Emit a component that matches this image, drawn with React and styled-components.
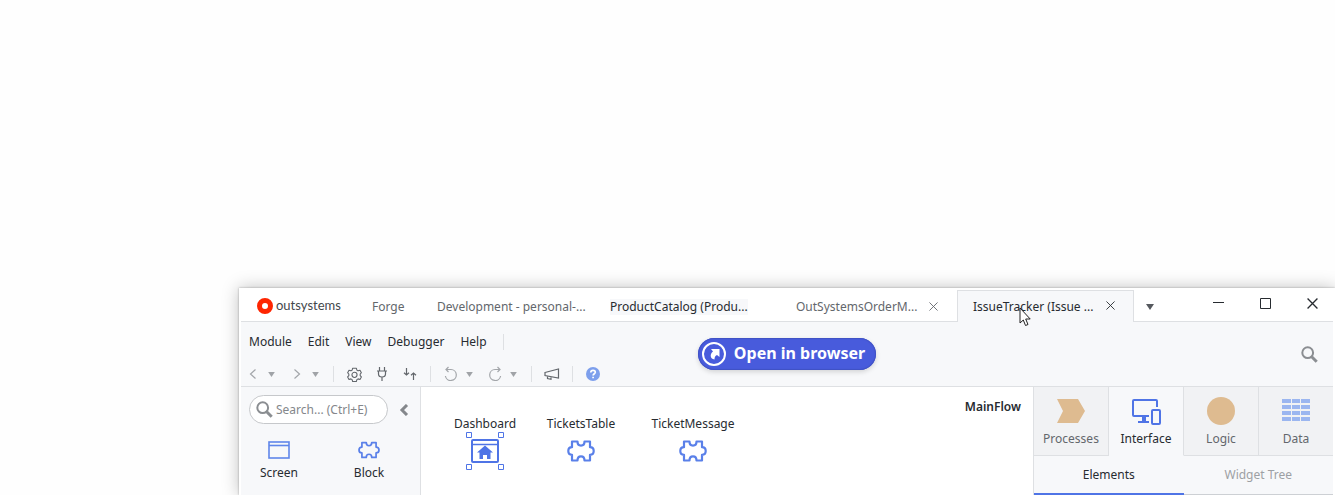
import React from "react";
import styled, { createGlobalStyle, css } from "styled-components";

const ink = "#272b30";
const line = "#dee0e3";
const surface = "#f7f8fa";
const blue = "#4f74e6";

const GlobalStyle = createGlobalStyle`
  * { box-sizing: border-box; }
  html, body, #root { height: 100%; }
  body {
    margin: 0;
    overflow: hidden;
    background: #fefefe;
    color: ${ink};
    font: 12px/16px "Noto Sans", "Open Sans", sans-serif;
  }
  button, input { font: inherit; color: inherit; }
  button { padding: 0; border: 0; background: none; }
  svg { display: block; flex: none; }
`;

const Page = styled.div`
  display: flex;
  height: 100%;
  padding: 288px 0 0 239px;
`;

const Window = styled.div`
  flex: 1;
  min-width: 0;
  display: flex;
  flex-direction: column;
  padding: 0 2px;
  background: #fff;
  box-shadow: 0 0 2px rgba(0, 0, 0, 0.3), 0 0 16px rgba(0, 0, 0, 0.25);
`;

const TitleBar = styled.header`
  display: flex;
  align-items: stretch;
  height: 34px;
  background: linear-gradient(${line}, ${line}) bottom / 100% 1px no-repeat;
`;

const Brand = styled.div`
  display: flex;
  align-items: center;
  gap: 3px;
  width: 115px;
  padding: 2px 0 0 16px;
  color: #44474b;
  font: 13px/16px Lato, sans-serif;
`;

const BrandName = styled.span`
  padding-bottom: 2px;
`;

const TabStrip = styled.nav`
  display: flex;
`;

const Tab = styled.div`
  position: relative;
  display: flex;
  align-items: center;
  justify-content: space-between;
  width: ${(p) => p.$width}px;
  padding: 4px 19px 0 16px;
  color: #63676c;
  ${(p) =>
    p.$active &&
    css`
      margin-top: 2px;
      padding: 0 18px 0 15px;
      border: 1px solid ${line};
      border-bottom: 0;
      background: ${surface};
      color: ${ink};
    `}
`;

const TabTitle = styled.button`
  white-space: nowrap;
  ${(p) =>
    p.$marked &&
    css`
      background: ${surface};
      color: ${ink};
    `}
`;

const TabClose = styled.button`
  padding-bottom: 2px;
`;

const Cursor = styled.svg`
  position: absolute;
  left: 61px;
  top: 16px;
`;

const TabMenu = styled.button`
  padding: 3px 0 0 12px;
`;

const WindowControls = styled.div`
  display: flex;
  align-items: center;
  gap: 36px;
  margin-left: auto;
  padding: 0 15px 3px 0;
`;

const Ribbon = styled.section`
  display: grid;
  grid-template-columns: 1fr auto 1fr;
  align-items: center;
  height: 65px;
  background: ${surface};
  border-bottom: 1px solid ${line};
`;

const Commands = styled.div`
  align-self: stretch;
  display: flex;
  flex-direction: column;
  justify-content: space-between;
  padding: 12px 0 4px 8px;
`;

const MenuBar = styled.nav`
  display: flex;
  gap: 16px;
`;

const Toolbar = styled.div`
  display: flex;
  align-items: center;
  height: 16px;
`;

const Tool = styled.button`
  display: flex;
  justify-content: center;
  width: ${(p) => p.$width || 16}px;
  margin-right: ${(p) => p.$after || 0}px;
  color: ${(p) => (p.$muted ? "#a3a6aa" : "#63676c")};
`;

const Divider = styled.span`
  width: 1px;
  height: 16px;
  margin-right: ${(p) => p.$after || 0}px;
  background: ${line};
`;

const OpenButton = styled.button`
  display: flex;
  align-items: center;
  gap: 8px;
  height: 32px;
  padding: 0 12px 0 4px;
  border-radius: 16px;
  background: #485bdc;
  box-shadow: inset 0 0 1px 1px #4051c4, 0 2px 5px rgba(0, 0, 0, 0.15);
  color: #fff;
  font-size: 16px;
  font-weight: 700;
  white-space: nowrap;
`;

const OpenLabel = styled.span`
  margin-right: -1px;
  padding-bottom: 2px;
`;

const RibbonSearch = styled.button`
  justify-self: end;
  margin-right: 15px;
`;

const Body = styled.main`
  flex: 1;
  display: flex;
  min-height: 108px;
`;

const Toolbox = styled.aside`
  width: 180px;
  padding: 8px 0 0;
  background: ${surface};
  border-right: 1px solid ${line};
`;

const SearchRow = styled.div`
  display: flex;
  align-items: center;
  gap: 11px;
  padding-left: 8px;
`;

const SearchBox = styled.label`
  display: flex;
  align-items: center;
  gap: 3px;
  width: 139px;
  height: 29px;
  padding-left: 6px;
  border: 1px solid #c6c8cb;
  border-radius: 15px;
  background: #fff;

  input {
    width: 100px;
    padding: 0;
    border: 0;
    outline: 0;
    background: none;
  }
  input::placeholder { color: #84878b; opacity: 1; }
`;

const Widgets = styled.div`
  display: grid;
  grid-template-columns: 76px 76px;
  gap: 14px;
  padding-top: 17px;
`;

const Widget = styled.button`
  display: flex;
  flex-direction: column;
  align-items: center;
  gap: 6px;
`;

const Canvas = styled.section`
  flex: 1;
  display: flex;
  justify-content: space-between;
  padding: 12px 12px 0 16px;
  background: #fff;
`;

const Nodes = styled.div`
  display: flex;
  padding-top: 17px;
`;

const Node = styled.figure`
  display: flex;
  flex-direction: column;
  align-items: center;
  width: ${(p) => p.$width}px;
  margin: 0;
`;

const FlowName = styled.strong`
  font-weight: 600;
`;

const Inspector = styled.aside`
  width: 300px;
  border-left: 1px solid ${line};
  background: ${surface};
`;

const Layers = styled.div`
  display: flex;
`;

const Layer = styled.button`
  flex: 1;
  display: flex;
  flex-direction: column;
  align-items: center;
  gap: 5px;
  height: 69px;
  padding-top: 9px;
  background: ${(p) => (p.$active ? surface : "#f1f2f4")};
  color: ${(p) => (p.$active ? ink : "#63676c")};
  border-right: 1px solid ${line};
  border-bottom: 1px solid ${(p) => (p.$active ? surface : line)};
  &:last-child { border-right: 0; }
`;

const SubTabs = styled.div`
  display: flex;
`;

const SubTab = styled.button`
  flex: 1;
  height: 39px;
  color: ${(p) => (p.$active ? ink : "#9da0a4")};
  border-bottom: ${(p) => (p.$active ? `2px solid ${blue}` : "1px solid #cdd0d4")};
`;

const Caret = ({ size = 7, color = "#a0a3a7" }) => (
  <svg width={size} height={size - 2} viewBox="0 0 8 6" fill={color}>
    <path d="M0 0h8L4 6z" />
  </svg>
);

const Close = ({ size, color, stroke = 1 }) => (
  <svg width={size} height={size} viewBox="0 0 10 10" stroke={color} strokeWidth={stroke}>
    <path d="M.5.5l9 9M9.5.5l-9 9" />
  </svg>
);

const Magnifier = ({ size = 17 }) => (
  <svg width={size} height={size} viewBox="0 0 17 17" fill="none" stroke="#8b8e92">
    <circle cx="6.7" cy="6.7" r="5.4" strokeWidth="2" />
    <path d="M10.7 10.7l5 5" strokeWidth="3" />
  </svg>
);

const Puzzle = ({ width, height }) => (
  <svg width={width} height={height} viewBox="0 0 28 22" fill="none" stroke="#5a80e9" strokeWidth="2.200" strokeLinejoin="round">
    <path d="M5 1.500h5.500C10.500 4 12 5.600 14 5.600S17.500 4 17.500 1.500H23v5.700c2.200 0 3.700 1.500 3.700 3.800S25.200 14.800 23 14.800v5.700h-5.500c0-2.500-1.500-4.100-3.500-4.100s-3.500 1.600-3.500 4.100H5v-5.700c-2.200 0-3.700-1.500-3.700-3.800S2.800 7.200 5 7.200z" />
  </svg>
);

const toolStroke = { fill: "none", stroke: "currentColor", strokeWidth: 1.2 };

const Chevron = ({ flip }) => (
  <svg width="8" height="12" viewBox="0 0 8 12" {...toolStroke}>
    <path d={flip ? "M1.500 1.500L6.500 6l-5 4.500" : "M6.500 1.500L1.500 6l5 4.500"} />
  </svg>
);

const gearPath =
  "M5.500 1h4l.6 2.100 1.300.8 2.100-.6 1.500 2.700-1.300 1.500v1.600l1.300 1.500-1.500 2.700-2.100-.6-1.300.8-.6 2.100h-4l-.6-2.100-1.300-.8-2.100.6L0 10.600l1.300-1.500V7.500L0 6l1.500-2.700 2.100.6 1.300-.8z";

const Gear = () => (
  <svg width="15" height="15" viewBox="-0.700 -0.300 16.400 16.400" {...toolStroke} strokeLinejoin="round">
    <path d={gearPath} />
    <circle cx="7.500" cy="8.300" r="2.800" />
  </svg>
);

const Plug = () => (
  <svg width="12" height="16" viewBox="0 0 12 16" {...toolStroke}>
    <path d="M3.500 1v4M8.500 1v4M1 5h10M2.500 5v3c0 2 1.200 3 3.500 3s3.500-1 3.500-3V5M6 11v4" />
  </svg>
);

const Arrows = () => (
  <svg width="14" height="14" viewBox="0 0 14 14" {...toolStroke}>
    <path d="M3.500 1v7M1 5.700L3.500 8 6 5.700M10.500 13V6M8 8.300L10.500 6 13 8.300" />
  </svg>
);

const Turn = ({ flip }) => (
  <svg width="14" height="16" viewBox="0 0 14 16" {...toolStroke}>
    <g transform={flip ? "matrix(-1 0 0 1 14 0)" : undefined}>
      <path d="M2.500 3.500h4.500a5.500 5.500 0 1 1-5.600 6.500M4.500 1L2 3.500 4.500 6" />
    </g>
  </svg>
);

const Megaphone = () => (
  <svg width="16" height="14" viewBox="0 0 16 14" {...toolStroke}>
    <path d="M1 5.500L14.500 2v9L1 8.500zM3.500 9v2.500l3.500.8V9.800" />
  </svg>
);

const Help = () => (
  <svg width="14" height="14" viewBox="0 0 14 14">
    <circle cx="7" cy="7" r="7" fill="#7d9fec" />
    <path d="M4.800 5.400C4.800 2.600 9.300 2.700 9.300 5.200 9.300 6.700 7.100 6.900 7.100 8.600M7.100 9.800v1.500" fill="none" stroke="#fff" strokeWidth="1.700" />
  </svg>
);

const ScreenIcon = () => (
  <svg width="22" height="18" viewBox="0 0 22 18" fill="none" stroke="#5f86ea" strokeWidth="1.600">
    <rect x="1" y="1" width="20" height="16" />
    <path d="M1 4.500h20" />
  </svg>
);

const DashboardIcon = () => (
  <svg width="38" height="38" viewBox="0 0 38 38" fill="none" stroke={blue}>
    <path d="M.5.5h5v5h-5zM32.500.5h5v5h-5zM.5 32.500h5v5h-5zM32.500 32.500h5v5h-5z" />
    <rect x="6" y="8" width="26" height="22" rx="1" strokeWidth="2" />
    <path d="M6 12.500h26" strokeWidth="1.500" />
    <path d="M19 13.500l8 7h-2.500V27h-3.500v-4h-4v4h-3.500v-6.500H11z" fill={blue} stroke="none" />
  </svg>
);

const ProcessIcon = () => (
  <svg width="28" height="30" viewBox="0 0 28 30" fill="#debb90">
    <path d="M0 3h21l7 12-7 12H0l6-12z" />
  </svg>
);

const InterfaceIcon = () => (
  <svg width="30" height="30" viewBox="0 0 30 30" fill="none" stroke={blue} strokeWidth="2">
    <path d="M26 11V5a1 1 0 0 0-1-1H3a1 1 0 0 0-1 1v14a1 1 0 0 0 1 1h15M7 26h11" />
    <path d="M13 20v6" strokeWidth="4" />
    <rect x="21" y="14" width="8" height="14" rx="1" />
  </svg>
);

const LogicIcon = () => (
  <svg width="28" height="30" viewBox="0 0 28 30" fill="#debb90">
    <circle cx="14" cy="15" r="14" />
  </svg>
);

const DataIcon = () => (
  <svg width="28" height="30" viewBox="0 0 28 30" fill="#9bb6f0">
    {[3, 9, 15, 21].map((y) =>
      [0, 10, 19].map((x) => <rect key={`${x}-${y}`} x={x} y={y} width={x === 10 ? 8 : 9} height="4" />)
    )}
  </svg>
);

const layers = [
  { name: "Processes", icon: <ProcessIcon /> },
  { name: "Interface", icon: <InterfaceIcon />, active: true },
  { name: "Logic", icon: <LogicIcon /> },
  { name: "Data", icon: <DataIcon /> },
];

export default function App() {
  return (
    <Page>
      <GlobalStyle />
      <Window>
        <TitleBar>
          <Brand>
            <svg width="16" height="16" viewBox="0 0 16 16" fill="none" stroke="#fe2501" strokeWidth="5">
              <circle cx="8" cy="8" r="5.500" />
            </svg>
            <BrandName>outsystems</BrandName>
          </Brand>
          <TabStrip>
            <Tab $width={65}><TabTitle>Forge</TabTitle></Tab>
            <Tab $width={173}><TabTitle>Development - personal-...</TabTitle></Tab>
            <Tab $width={186}><TabTitle $marked>ProductCatalog (Produ...</TabTitle></Tab>
            <Tab $width={177}>
              <TabTitle>OutSystemsOrderM...</TabTitle>
              <TabClose aria-label="Close tab"><Close size={9} color="#63676c" /></TabClose>
            </Tab>
            <Tab $width={177} $active>
              <TabTitle>IssueTracker (Issue ...</TabTitle>
              <TabClose aria-label="Close tab"><Close size={9} color={ink} /></TabClose>
              <Cursor width="13" height="20" viewBox="0 0 13 20" fill="#fff" stroke="#222">
                <path d="M1 1v15l3.300-3L6.500 18.500l2.500-1-2.300-5.500h4.500z" />
              </Cursor>
            </Tab>
          </TabStrip>
          <TabMenu aria-label="More tabs"><Caret size={8} color="#55595e" /></TabMenu>
          <WindowControls>
            <button aria-label="Minimize">
              <svg width="11" height="11" viewBox="0 0 11 11" stroke={ink}><path d="M0 4.500h11" /></svg>
            </button>
            <button aria-label="Maximize">
              <svg width="11" height="11" viewBox="0 0 11 11" fill="none" stroke={ink}><path d="M.5.5h10v10H.5z" /></svg>
            </button>
            <button aria-label="Close"><Close size={11} color={ink} stroke={1.2} /></button>
          </WindowControls>
        </TitleBar>

        <Ribbon>
          <Commands>
            <MenuBar>
              {["Module", "Edit", "View", "Debugger", "Help"].map((item) => (
                <button key={item}>{item}</button>
              ))}
              <Divider />
            </MenuBar>
            <Toolbar>
              <Tool $width={8} $after={11} $muted aria-label="Back"><Chevron /></Tool>
              <Tool $width={7} $after={18} $muted aria-label="Back history"><Caret /></Tool>
              <Tool $width={8} $after={11} $muted aria-label="Forward"><Chevron flip /></Tool>
              <Tool $width={7} $after={14} $muted aria-label="Forward history"><Caret /></Tool>
              <Divider $after={12} />
              <Tool $after={12} aria-label="Settings"><Gear /></Tool>
              <Tool $after={12} aria-label="Dependencies"><Plug /></Tool>
              <Tool $after={12} aria-label="Compare"><Arrows /></Tool>
              <Divider $after={12} />
              <Tool $after={7} $muted aria-label="Undo"><Turn /></Tool>
              <Tool $width={7} $after={14} $muted aria-label="Undo history"><Caret /></Tool>
              <Tool $after={7} $muted aria-label="Redo"><Turn flip /></Tool>
              <Tool $width={7} $after={14} $muted aria-label="Redo history"><Caret /></Tool>
              <Divider $after={12} />
              <Tool $after={12} aria-label="Feedback"><Megaphone /></Tool>
              <Divider $after={12} />
              <Tool aria-label="Help"><Help /></Tool>
            </Toolbar>
          </Commands>
          <OpenButton>
            <svg width="24" height="24" viewBox="0 0 24 24" fill="none" stroke="#fff">
              <circle cx="12" cy="12" r="11" strokeWidth="2" />
              <path d="M9 7h8.500v8l-2.500-2c-2 1-2.500 2-2.500 4.500-4.500-.5-5-5.500-1.500-8z" fill="#fff" stroke="none" />
            </svg>
            <OpenLabel>Open in browser</OpenLabel>
          </OpenButton>
          <RibbonSearch aria-label="Search"><Magnifier /></RibbonSearch>
        </Ribbon>

        <Body>
          <Toolbox>
            <SearchRow>
              <SearchBox>
                <Magnifier />
                <input type="text" aria-label="Search widgets" placeholder="Search... (Ctrl+E)" />
              </SearchBox>
              <button aria-label="Collapse">
                <svg width="10" height="12" viewBox="0 0 10 12" fill="none" stroke="#84878b" strokeWidth="3">
                  <path d="M8 1L3 6l5 5" />
                </svg>
              </button>
            </SearchRow>
            <Widgets>
              <Widget><ScreenIcon />Screen</Widget>
              <Widget><Puzzle width={22} height={18} />Block</Widget>
            </Widgets>
          </Toolbox>

          <Canvas>
            <Nodes>
              <Node $width={96}><figcaption>Dashboard</figcaption><DashboardIcon /></Node>
              <Node $width={96}><figcaption>TicketsTable</figcaption><Puzzle width={28} height={38} /></Node>
              <Node $width={128}><figcaption>TicketMessage</figcaption><Puzzle width={28} height={38} /></Node>
            </Nodes>
            <FlowName>MainFlow</FlowName>
          </Canvas>

          <Inspector>
            <Layers>
              {layers.map((l) => (
                <Layer key={l.name} $active={l.active}>{l.icon}{l.name}</Layer>
              ))}
            </Layers>
            <SubTabs>
              <SubTab $active>Elements</SubTab>
              <SubTab>Widget Tree</SubTab>
            </SubTabs>
          </Inspector>
        </Body>
      </Window>
    </Page>
  );
}
